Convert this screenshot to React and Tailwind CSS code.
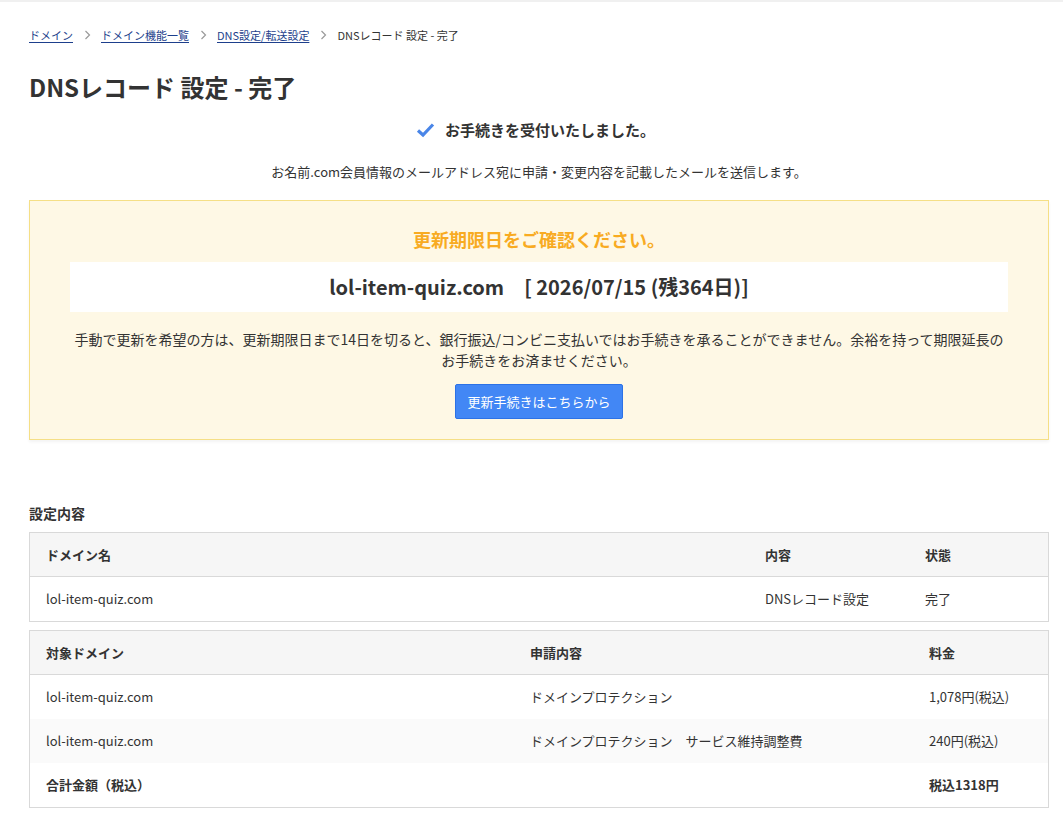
import React from 'react'

const font = { fontFamily: '"Noto Sans CJK JP", "Noto Sans", sans-serif' }

function Chevron() {
  return (
    <svg width="7" height="10" viewBox="0 0 7 10" className="ml-[11px] mr-[10px] shrink-0">
      <polyline points="1.5,1 5.5,5 1.5,9" fill="none" stroke="#9a9a9a" strokeWidth="1.2" />
    </svg>
  )
}

function Breadcrumb() {
  const links = ['ドメイン', 'ドメイン機能一覧', 'DNS設定/転送設定']
  return (
    <nav className="flex items-center text-[11px] leading-[16px]">
      {links.map((l) => (
        <React.Fragment key={l}>
          <a href="#" className="text-[#1d3f8c] underline underline-offset-2">{l}</a>
          <Chevron />
        </React.Fragment>
      ))}
      <span className="text-[#333]">DNSレコード 設定 - 完了</span>
    </nav>
  )
}

function ExpiryNotice() {
  return (
    <div className="mt-[18px] border border-[#f5df86] bg-[#fef8e5] px-[40px] pt-[25px] pb-[20px] shadow-[0_2px_3px_rgba(0,0,0,0.05)]">
      <p className="text-center text-[18px] leading-[27px] font-bold text-[#f8ab22]">
        更新期限日をご確認ください。
      </p>
      <div className="mt-[9px] flex h-[50px] items-center justify-center bg-white text-[20px] font-bold text-[#333]">
        lol-item-quiz.com　[ 2026/07/15 (残364日)]
      </div>
      <p className="mt-[17px] text-center text-[14px] leading-[21px] text-[#333]">
        手動で更新を希望の方は、更新期限日まで14日を切ると、銀行振込/コンビニ支払いではお手続きを承ることができません。余裕を持って期限延長のお手続きをお済ませください。
      </p>
      <div className="mt-[13px] flex justify-center">
        <button className="h-[35px] w-[168px] rounded-[2px] border border-[#2c72e6] bg-[#4287f5] text-[13px] text-white">
          更新手続きはこちらから
        </button>
      </div>
    </div>
  )
}

function Row({ cols, cells, bold, bg, border }) {
  return (
    <div
      className={`grid h-[44px] items-center text-[13px] text-[#333] ${cols} ${bold ? 'font-bold' : ''} ${bg || ''} ${border ? 'border-b border-[#d9d9d9]' : ''}`}
    >
      {cells.map((c, i) => (
        <div key={i} className="pl-[16px]">{c}</div>
      ))}
    </div>
  )
}

export default function App() {
  const t1 = 'grid-cols-[719px_160px_1fr]'
  const t2 = 'grid-cols-[484px_399px_1fr]'
  return (
    <div className="min-h-screen bg-white text-[#333]" style={font}>
      <div className="h-[2px] bg-[#f0f0f0]" />
      <div className="pl-[29px] pr-[14px] pt-[25px]">
        <Breadcrumb />
        <h1 className="mt-[26px] text-[24px] leading-[36px] font-bold">DNSレコード 設定 - 完了</h1>

        <div className="mt-[14px] flex items-center justify-center gap-[10px] pr-[7px]">
          <svg width="19" height="16" viewBox="0 0 19 16">
            <polyline points="2,8.5 7,13 17,2.5" fill="none" stroke="#4a86e8" strokeWidth="3.2" strokeLinejoin="miter" />
          </svg>
          <span className="text-[15px] leading-[22px] font-bold">お手続きを受付いたしました。</span>
        </div>
        <p className="mt-[21px] text-center text-[13px] leading-[20px]">
          お名前.com会員情報のメールアドレス宛に申請・変更内容を記載したメールを送信します。
        </p>

        <ExpiryNotice />

        <h2 className="mt-[63px] text-[14px] leading-[21px] font-bold">設定内容</h2>
        <div className="mt-[8px] border border-[#d9d9d9]">
          <Row cols={t1} cells={['ドメイン名', '内容', '状態']} bold bg="bg-[#f6f6f6]" border />
          <Row cols={t1} cells={['lol-item-quiz.com', 'DNSレコード設定', '完了']} />
        </div>

        <div className="mt-[8px] border border-[#d9d9d9]">
          <Row cols={t2} cells={['対象ドメイン', '申請内容', '料金']} bold bg="bg-[#f6f6f6]" border />
          <Row cols={t2} cells={['lol-item-quiz.com', 'ドメインプロテクション', '1,078円(税込)']} />
          <Row cols={t2} cells={['lol-item-quiz.com', 'ドメインプロテクション　サービス維持調整費', '240円(税込)']} bg="bg-[#fafafa]" />
          <Row cols={t2} cells={['合計金額（税込）', '', '税込1318円']} bold />
        </div>

        <div className="mt-[20px] border-t border-[#f0f0f0] h-[10px]" />
      </div>
    </div>
  )
}
